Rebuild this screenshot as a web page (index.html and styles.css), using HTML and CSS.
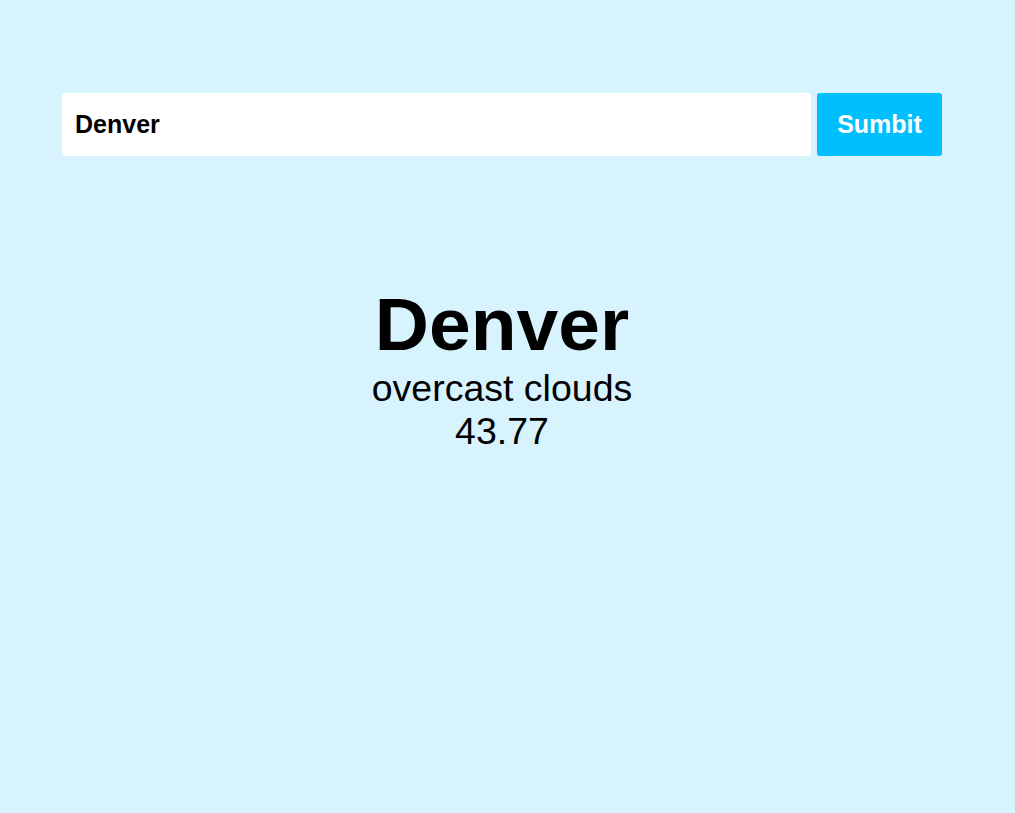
FILE: index.html
```html
<!DOCTYPE html>
<html>
<head>
<meta charset="utf-8">
<link rel="stylesheet" href="styles.css">
</head>
<body>
<div class="app">
  <form class="search">
    <input class="search-input" type="text" value="Denver">
    <button class="search-btn" type="button">Sumbit</button>
  </form>
  <div class="weather">
    <h1 class="city">Denver</h1>
    <div class="desc">overcast clouds</div>
    <div class="temp">43.77</div>
  </div>
</div>
</body>
</html>
```

FILE: styles.css
```css
html, body {
  margin: 0;
  padding: 0;
  background: #d6f3fe;
  height: 100%;
}
body {
  font-family: "Liberation Sans", Arial, sans-serif;
  color: #000;
}
.app {
  width: 880px;
  margin-left: 62px;
  padding-top: 93px;
}
.search {
  display: flex;
  gap: 6px;
  height: 63px;
  margin: 0;
}
.search-input {
  flex: 1;
  border: none;
  outline: none;
  border-radius: 3px;
  background: #fff;
  padding: 0 13px;
  font-family: inherit;
  font-size: 25px;
  font-weight: bold;
  color: #000;
}
.search-btn {
  width: 125px;
  border: none;
  border-radius: 3px;
  background: #00bfff;
  color: #fff;
  font-family: inherit;
  font-size: 25px;
  font-weight: bold;
  padding: 0;
}
.weather {
  text-align: center;
  margin-top: 126px;
}
.city {
  margin: 0;
  font-size: 75px;
  font-weight: bold;
  line-height: 85px;
}
.desc, .temp {
  font-size: 37.5px;
  line-height: 43px;
}
```
